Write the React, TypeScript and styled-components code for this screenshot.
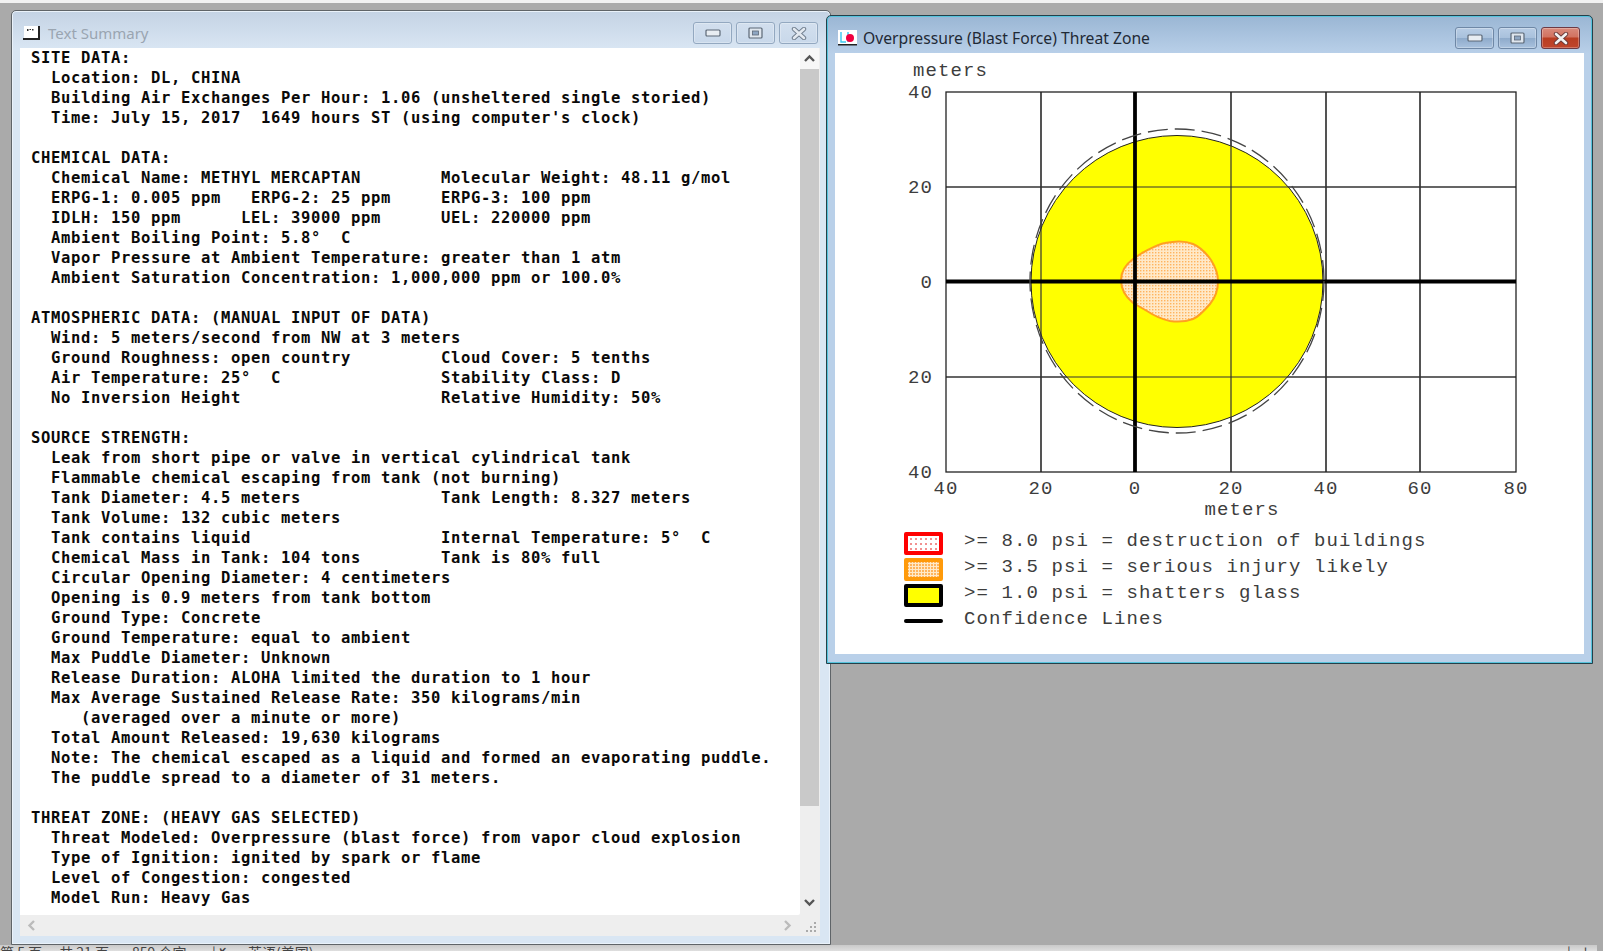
import React from "react";
import styled, { createGlobalStyle } from "styled-components";

const Global = createGlobalStyle`
  html, body { margin: 0; padding: 0; height: 100%; background: #aaaaaa; overflow: hidden; }
  #root { height: 100%; }
`;

const Page = styled.div`
  width: 1603px;
  height: 951px;
  display: flex;
  flex-direction: column;
  background: #aaaaaa;
  overflow: hidden;
`;
const TopStrip = styled.div`
  height: 3px;
  flex: none;
  background: #f1f1f1;
`;
const Desk = styled.div`
  position: relative;
  flex: 1;
`;
const StatusBar = styled.div`
  flex: none;
  height: 6px;
  overflow: hidden;
  display: flex;
  background: linear-gradient(#c9c9c9, #dedede);
  font: 14px/16px "Noto Sans CJK SC", "Noto Sans", sans-serif;
  color: #444;
  white-space: pre;
`;
const StatusItem = styled.span<{ $w: number }>`
  flex: none;
  width: ${p => p.$w}px;
  margin-top: -1px;
`;
const StatusEnd = styled.span`
  flex: none;
  width: 6px;
  margin-left: 13px;
  background: #aaaaaa;
`;

const Win = styled.div<{ $x: number; $y: number; $w: number; $h: number; $active?: boolean }>`
  position: absolute;
  left: ${p => p.$x}px;
  top: ${p => p.$y - 3}px;
  width: ${p => p.$w}px;
  height: ${p => p.$h}px;
  box-sizing: border-box;
  display: flex;
  flex-direction: column;
  border-radius: 5px 5px 0 0;
  border: 1px solid ${p => (p.$active ? "#24404a" : "#5f6468")};
  box-shadow: ${p => (p.$active ? "inset 0 0 0 1px #55c3dc" : "inset 0 0 0 1px #eaf2fa")};
  background: ${p =>
    p.$active
      ? "linear-gradient(#9ab6d4 0, #b9d0e9 38px)"
      : "linear-gradient(#c4d3e4 0, #d9e6f3 38px)"};
  z-index: ${p => (p.$active ? 2 : 1)};
`;
const TitleBar = styled.div<{ $pl: number; $pr: number }>`
  flex: none;
  height: 37px;
  display: flex;
  align-items: center;
  padding: 7px ${p => p.$pr}px 0 ${p => p.$pl}px;
  box-sizing: border-box;
`;
const TitleIcon = styled.svg`
  flex: none;
  width: 19px;
  height: 16px;
  display: block;
`;
const TitleText = styled.div<{ $active?: boolean }>`
  margin-left: 6px;
  flex: 1;
  font: ${p => (p.$active ? 15.7 : 15)}px/20px "Noto Sans", sans-serif;
  color: ${p => (p.$active ? "#1f2a36" : "#9aa5b1")};
  white-space: nowrap;
`;
const Controls = styled.div`
  display: flex;
  gap: 4px;
  flex: none;
`;
const CtrlBtn = styled.div<{ $kind: "plain" | "faded" | "close" }>`
  width: 39px;
  height: 22px;
  box-sizing: border-box;
  display: flex;
  align-items: center;
  justify-content: center;
  border-radius: 3px;
  border: 1px solid ${p => (p.$kind === "close" ? "#6e3a44" : p.$kind === "plain" ? "#6f88a6" : "#93a8c0")};
  box-shadow: inset 0 0 0 1px rgba(255, 255, 255, 0.28);
  background: ${p =>
    p.$kind === "close"
      ? "linear-gradient(#d98a7c 0, #d27260 45%, #b93d22 50%, #c0452c 100%)"
      : p.$kind === "plain"
      ? "linear-gradient(#b8cde5 0, #a9c1dc 48%, #8fabcb 52%, #a9c2de 100%)"
      : "linear-gradient(#d2dfee, #c8d8ea)"};
`;

const TextClient = styled.div`
  flex: 1;
  margin: 0 10px 8px 8px;
  min-height: 0;
  display: grid;
  grid-template-columns: 780px 19px;
  grid-template-rows: 867px 20px;
  background: #eeeeee;
`;
const TextArea = styled.div`
  background: #ffffff;
  overflow: hidden;
  padding: 0 0 0 11px;
  box-sizing: border-box;
  border-bottom-right-radius: 2px;
`;
const Line = styled.div`
  height: 20px;
  font: bold 15.5px/20px "DejaVu Sans Mono", monospace;
  letter-spacing: 0.67px;
  color: #0a0a0a;
  white-space: pre;
`;
const VScroll = styled.div`
  display: flex;
  flex-direction: column;
  background: #eeeeee;
`;
const ScrollCap = styled.div<{ $h: number; $white?: boolean }>`
  flex: none;
  height: ${p => p.$h}px;
  display: flex;
  align-items: center;
  justify-content: center;
  background: ${p => (p.$white ? "#f7f7f7" : "transparent")};
`;
const Thumb = styled.div`
  flex: none;
  height: 737px;
  background: #c9c9c9;
`;
const Track = styled.div`
  flex: 1;
`;
const HScroll = styled.div`
  display: flex;
  align-items: center;
  justify-content: space-between;
  padding: 0 7px 0 6px;
  background: #eeeeee;
`;
const Corner = styled.div`
  display: flex;
  align-items: flex-end;
  justify-content: flex-end;
  padding: 0 2px 2px 0;
`;
const Chev = styled.svg`
  display: block;
  width: 11px;
  height: 11px;
  fill: none;
  stroke-width: 2.4;
`;

const ChartClient = styled.div`
  flex: 1;
  margin: 0 8px 9px 8px;
  background: #ffffff;
  display: flex;
  flex-direction: column;
  min-height: 0;
`;
const Chart = styled.svg`
  display: block;
  flex: none;
  width: 748px;
  height: 467px;
`;
const ChartLabel = styled.text`
  font: 19px "Liberation Mono", monospace;
  letter-spacing: 1.1px;
  fill: #3d3d3d;
`;
const Legend = styled.div`
  margin-top: 10px;
  padding-left: 69px;
  display: flex;
  flex-direction: column;
`;
const LegendRow = styled.div`
  height: 26px;
  display: flex;
  align-items: flex-start;
`;
const LegendText = styled.div`
  margin: 1px 0 0 21px;
  font: 19px/20px "Liberation Mono", monospace;
  letter-spacing: 1.1px;
  color: #3d3d3d;
  white-space: pre;
`;
const Swatch = styled.div<{ $edge: string; $dot?: string; $fill: string; $size?: number }>`
  flex: none;
  width: 39px;
  height: 23px;
  margin-top: 2px;
  box-sizing: border-box;
  border: 4px solid ${p => p.$edge};
  border-radius: 2px;
  background-color: ${p => p.$fill};
  ${p =>
    p.$dot
      ? `background-image: radial-gradient(circle at 1px 1px, ${p.$dot} 1px, transparent 1.2px); background-size: ${p.$size}px ${p.$size}px; background-position: 2px 2px;`
      : ""}
`;
const ConfLine = styled.div`
  flex: none;
  width: 39px;
  height: 4px;
  margin-top: 11px;
  border-radius: 2px;
  background: #000;
`;

const col = (l: string, r: string) => l.padEnd(41) + r;
const lines: string[] = [
  "SITE DATA:",
  "  Location: DL, CHINA",
  "  Building Air Exchanges Per Hour: 1.06 (unsheltered single storied)",
  "  Time: July 15, 2017  1649 hours ST (using computer's clock)",
  "",
  "CHEMICAL DATA:",
  col("  Chemical Name: METHYL MERCAPTAN", "Molecular Weight: 48.11 g/mol"),
  "  ERPG-1: 0.005 ppm   ERPG-2: 25 ppm     ERPG-3: 100 ppm",
  "  IDLH: 150 ppm      LEL: 39000 ppm      UEL: 220000 ppm",
  "  Ambient Boiling Point: 5.8°  C",
  "  Vapor Pressure at Ambient Temperature: greater than 1 atm",
  "  Ambient Saturation Concentration: 1,000,000 ppm or 100.0%",
  "",
  "ATMOSPHERIC DATA: (MANUAL INPUT OF DATA)",
  "  Wind: 5 meters/second from NW at 3 meters",
  col("  Ground Roughness: open country", "Cloud Cover: 5 tenths"),
  col("  Air Temperature: 25°  C", "Stability Class: D"),
  col("  No Inversion Height", "Relative Humidity: 50%"),
  "",
  "SOURCE STRENGTH:",
  "  Leak from short pipe or valve in vertical cylindrical tank",
  "  Flammable chemical escaping from tank (not burning)",
  col("  Tank Diameter: 4.5 meters", "Tank Length: 8.327 meters"),
  "  Tank Volume: 132 cubic meters",
  col("  Tank contains liquid", "Internal Temperature: 5°  C"),
  col("  Chemical Mass in Tank: 104 tons", "Tank is 80% full"),
  "  Circular Opening Diameter: 4 centimeters",
  "  Opening is 0.9 meters from tank bottom",
  "  Ground Type: Concrete",
  "  Ground Temperature: equal to ambient",
  "  Max Puddle Diameter: Unknown",
  "  Release Duration: ALOHA limited the duration to 1 hour",
  "  Max Average Sustained Release Rate: 350 kilograms/min",
  "     (averaged over a minute or more)",
  "  Total Amount Released: 19,630 kilograms",
  "  Note: The chemical escaped as a liquid and formed an evaporating puddle.",
  "  The puddle spread to a diameter of 31 meters.",
  "",
  "THREAT ZONE: (HEAVY GAS SELECTED)",
  "  Threat Modeled: Overpressure (blast force) from vapor cloud explosion",
  "  Type of Ignition: ignited by spark or flame",
  "  Level of Congestion: congested",
  "  Model Run: Heavy Gas",
];

const MinGlyph = () => (
  <svg width="16" height="8" viewBox="0 0 16 8">
    <rect x="1" y="1" width="14" height="6" rx="1" fill="#e8edf2" stroke="#5c6876" strokeWidth="1.2" />
  </svg>
);
const MaxGlyph = () => (
  <svg width="15" height="12" viewBox="0 0 15 12">
    <rect x="1" y="1" width="13" height="10" rx="1" fill="#dfe6ee" stroke="#5c6876" strokeWidth="1.2" />
    <rect x="4.5" y="4" width="6" height="4" fill="#8ea6c2" stroke="#5c6876" strokeWidth="0.8" />
  </svg>
);
const CloseGlyph = ({ color, edge }: { color: string; edge: string }) => (
  <svg width="16" height="13" viewBox="0 0 16 13">
    <path d="M3 2 L13 11 M13 2 L3 11" stroke={edge} strokeWidth="4.4" strokeLinecap="round" />
    <path d="M3 2 L13 11 M13 2 L3 11" stroke={color} strokeWidth="2.6" strokeLinecap="round" />
  </svg>
);

const xs = [1041, 1135, 1231, 1326, 1420];
const ys = [187, 281, 377];

const Grid = () => (
  <g stroke="#333" strokeWidth="1.2" fill="none">
    {xs.map(x => (
      <line key={x} x1={x} x2={x} y1={92} y2={472} />
    ))}
    {ys.map(y => (
      <line key={y} x1={946} x2={1516} y1={y} y2={y} />
    ))}
  </g>
);

const blob =
  "M1121 280 C1121 272 1125 265 1133 259 L1142 253 C1150 249 1158 244 1165 243 C1175 241 1186 241 1193 244 C1200 247 1206 253 1211 260 C1216 268 1218 276 1218 281 C1218 290 1215 298 1210 304 C1204 311 1198 317 1193 319 C1185 322 1177 322 1170 321 C1161 319 1153 315 1147 311 L1133 303 C1127 298 1121 290 1121 280 Z";

export default function App() {
  return (
    <Page>
      <Global />
      <TopStrip />
      <Desk>
        <Win $x={11} $y={10} $w={820} $h={935}>
          <TitleBar $pl={11} $pr={12}>
            <TitleIcon viewBox="0 0 19 16">
              <rect x="1" y="1" width="16" height="12" fill="#fff" />
              <rect x="15" y="1" width="2" height="13" fill="#222" />
              <rect x="0" y="13" width="17" height="2" fill="#222" />
              <path d="M4 4h1.5v2H4zM6.5 4H8v1H6.5zM9 4h1.5v1.5H9z" fill="#333" />
            </TitleIcon>
            <TitleText>Text Summary</TitleText>
            <Controls>
              <CtrlBtn $kind="faded"><MinGlyph /></CtrlBtn>
              <CtrlBtn $kind="faded"><MaxGlyph /></CtrlBtn>
              <CtrlBtn $kind="faded"><CloseGlyph color="#e3e9f0" edge="#6e7c8c" /></CtrlBtn>
            </Controls>
          </TitleBar>
          <TextClient>
            <TextArea>
              {lines.map((l, i) => (
                <Line key={i}>{l}</Line>
              ))}
            </TextArea>
            <VScroll>
              <ScrollCap $h={21} $white>
                <Chev viewBox="0 0 11 11" stroke="#555"><path d="M1 8 L5.5 3.5 L10 8" /></Chev>
              </ScrollCap>
              <Thumb />
              <Track />
              <ScrollCap $h={26}>
                <Chev viewBox="0 0 11 11" stroke="#555"><path d="M1 3 L5.5 7.5 L10 3" /></Chev>
              </ScrollCap>
            </VScroll>
            <HScroll>
              <Chev viewBox="0 0 11 11" stroke="#bbb"><path d="M8 1 L3.5 5.5 L8 10" /></Chev>
              <Chev viewBox="0 0 11 11" stroke="#bbb"><path d="M3 1 L7.5 5.5 L3 10" /></Chev>
            </HScroll>
            <Corner>
              <svg width="11" height="11" viewBox="0 0 11 11" fill="#aaa">
                <rect x="8" y="0" width="2" height="2" />
                <rect x="4" y="4" width="2" height="2" />
                <rect x="8" y="4" width="2" height="2" />
                <rect x="0" y="8" width="2" height="2" />
                <rect x="4" y="8" width="2" height="2" />
                <rect x="8" y="8" width="2" height="2" />
              </svg>
            </Corner>
          </TextClient>
        </Win>

        <Win $x={826} $y={15} $w={767} $h={649} $active>
          <TitleBar $pl={11} $pr={12}>
            <TitleIcon viewBox="0 0 19 16">
              <rect x="0" y="0" width="19" height="14" fill="#fff" />
              <path d="M3 2 V12 H8 M10 2 V12" stroke="#38c8f0" strokeWidth="1.4" fill="none" />
              <circle cx="12" cy="8" r="4" fill="#f00040" />
              <rect x="0" y="14" width="19" height="1.5" fill="#222" />
            </TitleIcon>
            <TitleText $active>Overpressure (Blast Force) Threat Zone</TitleText>
            <Controls>
              <CtrlBtn $kind="plain"><MinGlyph /></CtrlBtn>
              <CtrlBtn $kind="plain"><MaxGlyph /></CtrlBtn>
              <CtrlBtn $kind="close"><CloseGlyph color="#f2f2f2" edge="#6b3a3a" /></CtrlBtn>
            </Controls>
          </TitleBar>
          <ChartClient>
            <Chart viewBox="835 53 748 467">
              <defs>
                <pattern id="dots" width="3" height="3" patternUnits="userSpaceOnUse">
                  <rect width="3" height="3" fill="#ffe9c8" />
                  <rect width="1.4" height="1.4" fill="#ffb45e" />
                </pattern>
              </defs>
              <ChartLabel x={913} y={76}>meters</ChartLabel>
              <Grid />
              <circle cx={1177} cy={281.5} r={146} fill="#ffff00" stroke="#222" strokeWidth="1" />
              <Grid />
              <path d={blob} fill="url(#dots)" stroke="#ffa020" strokeWidth="2" />
              <rect x={946} y={92} width={570} height={380} fill="none" stroke="#222" strokeWidth="1.3" />
              <line x1={946} x2={1516} y1={281.5} y2={281.5} stroke="#000" strokeWidth="3.8" />
              <line x1={1135} x2={1135} y1={92} y2={472} stroke="#000" strokeWidth="3.8" />
              <ellipse cx={1177} cy={281} rx={147} ry={152} fill="none" stroke="#444" strokeWidth="1.3" strokeDasharray="20 7" />
              <g textAnchor="end">
                {[["40", 98], ["20", 193], ["0", 288], ["20", 383], ["40", 478]].map(([t, y]) => (
                  <ChartLabel key={String(y)} x={933} y={Number(y)}>{t}</ChartLabel>
                ))}
              </g>
              <g textAnchor="middle">
                {[["40", 946], ["20", 1041], ["0", 1135], ["20", 1231], ["40", 1326], ["60", 1420], ["80", 1516]].map(([t, x]) => (
                  <ChartLabel key={String(x)} x={Number(x)} y={494}>{t}</ChartLabel>
                ))}
                <ChartLabel x={1242} y={515}>meters</ChartLabel>
              </g>
            </Chart>
            <Legend>
              <LegendRow>
                <Swatch $edge="#ff0000" $fill="#ffffff" $dot="#f29090" $size={5} />
                <LegendText>{">= 8.0 psi = destruction of buildings"}</LegendText>
              </LegendRow>
              <LegendRow>
                <Swatch $edge="#ff9a0a" $fill="#ffe9c8" $dot="#ffb45e" $size={3} />
                <LegendText>{">= 3.5 psi = serious injury likely"}</LegendText>
              </LegendRow>
              <LegendRow>
                <Swatch $edge="#000000" $fill="#ffff00" />
                <LegendText>{">= 1.0 psi = shatters glass"}</LegendText>
              </LegendRow>
              <LegendRow>
                <ConfLine />
                <LegendText>Confidence Lines</LegendText>
              </LegendRow>
            </Legend>
          </ChartClient>
        </Win>
      </Desk>
      <StatusBar>
        <StatusItem $w={132}>{"第 5 页， 共 21 页"}</StatusItem>
        <StatusItem $w={80}>859 个字</StatusItem>
        <StatusItem $w={36}>{"|✗"}</StatusItem>
        <StatusItem $w={1319}>英语(美国)</StatusItem>
        <StatusItem $w={17}>{"|=‡=|"}</StatusItem>
        <StatusEnd />
      </StatusBar>
    </Page>
  );
}
